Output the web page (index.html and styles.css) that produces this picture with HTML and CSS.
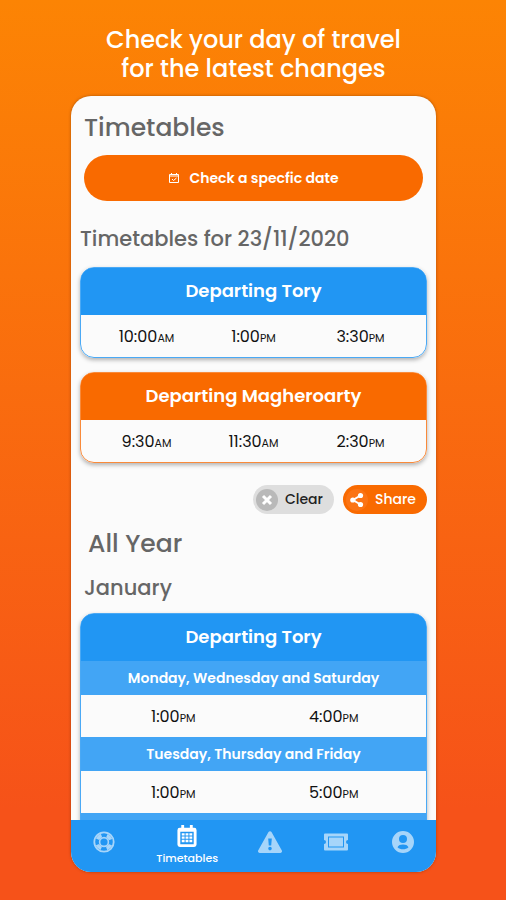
FILE: index.html
```html
<!DOCTYPE html>
<html lang="en">
<head>
<meta charset="utf-8">
<meta name="viewport" content="width=device-width, initial-scale=1">
<title>Timetables</title>
<link rel="stylesheet" href="styles.css">
</head>
<body>
<h1 class="tagline">Check your day of travel<br>for the latest changes</h1>
<div class="phone">
  <main class="screen">
    <h2 class="title">Timetables</h2>
    <button class="check" type="button">
      <svg viewBox="0 0 12 12" width="12" height="12" fill="none" stroke="currentColor" aria-hidden="true"><path d="M1.5 2.5h9v8h-9zM1.5 4h9M3.5 1v2M8.500 1v2M4 7l1.500 1.500L8.500 6"/></svg>
      Check a specfic date
    </button>

    <h3 class="day-title">Timetables for 23/11/2020</h3>
    <section class="card blue">
      <h4 class="card-head">Departing Tory</h4>
      <table class="times three">
        <tbody><tr><td>10:00<small>AM</small></td><td>1:00<small>PM</small></td><td>3:30<small>PM</small></td></tr></tbody>
      </table>
    </section>
    <section class="card orange">
      <h4 class="card-head">Departing Magheroarty</h4>
      <table class="times three">
        <tbody><tr><td>9:30<small>AM</small></td><td>11:30<small>AM</small></td><td>2:30<small>PM</small></td></tr></tbody>
      </table>
    </section>

    <div class="actions">
      <button class="pill clear" type="button">
        <svg viewBox="0 0 22 22" width="22" height="22" aria-hidden="true"><circle cx="11" cy="11" r="11" fill="#b9b9b9"/><path d="M7 7l8 8M15 7l-8 8" stroke="#fff" stroke-width="3"/></svg>
        <span>Clear</span>
      </button>
      <button class="pill share" type="button">
        <svg viewBox="0 0 22 22" width="22" height="22" aria-hidden="true"><circle cx="11" cy="11" r="11" fill="#fb7414"/><path d="M14.500 6.500L7 11l7.500 4.500" fill="none" stroke="#fff" stroke-width="2"/><g fill="#fff"><circle cx="14.500" cy="6.500" r="2.600"/><circle cx="6.800" cy="11" r="2.600"/><circle cx="14.500" cy="15.500" r="2.600"/></g></svg>
        <span>Share</span>
      </button>
    </div>

    <h2 class="season">All Year</h2>
    <h3 class="month">January</h3>
    <section class="card blue">
      <h4 class="card-head">Departing Tory</h4>
      <table class="times two">
        <tbody>
          <tr><th colspan="2">Monday, Wednesday and Saturday</th></tr>
          <tr><td>1:00<small>PM</small></td><td>4:00<small>PM</small></td></tr>
          <tr><th colspan="2">Tuesday, Thursday and Friday</th></tr>
          <tr><td>1:00<small>PM</small></td><td>5:00<small>PM</small></td></tr>
          <tr><th colspan="2"></th></tr>
        </tbody>
      </table>
    </section>
  </main>

  <nav class="tabs">
    <a class="tab" href="#" aria-label="Help">
      <svg viewBox="0 0 22 22" width="22" height="22" fill="none" stroke="currentColor" aria-hidden="true"><circle cx="11" cy="11" r="9.700" stroke-width="1.800"/><circle cx="11" cy="11" r="4.400" stroke-width="1.600"/><circle cx="11" cy="11" r="7" stroke-width="3.600" stroke-dasharray="5.500 5.496" stroke-dashoffset="-2.750"/></svg>
    </a>
    <a class="tab active" href="#" aria-current="page">
      <svg viewBox="0 0 20 23" width="20" height="23" aria-hidden="true"><path fill="currentColor" fill-rule="evenodd" d="M4 0h3v3h6V0h3v3h1.500A2.500 2.500 0 0 1 20 5.500v15a2.500 2.500 0 0 1-2.500 2.500h-15A2.500 2.500 0 0 1 0 20.500v-15A2.500 2.500 0 0 1 2.500 3H4zM3 7v13h14V7z"/><path fill="currentColor" d="M4.500 8.500h3v2.500h-3zM8.500 8.500h3v2.500h-3zM12.500 8.500h3v2.500h-3zM4.500 12h3v2.500h-3zM8.500 12h3v2.500h-3zM12.500 12h3v2.500h-3zM4.500 15.500h3V18h-3zM8.500 15.500h3V18h-3zM12.500 15.500h3V18h-3z"/></svg>
      <span>Timetables</span>
    </a>
    <a class="tab" href="#" aria-label="Alerts">
      <svg viewBox="0 0 24 22" width="24" height="22" aria-hidden="true"><path fill="currentColor" fill-rule="evenodd" d="M10.500 1a1.800 1.800 0 0 1 3 0l10.200 18.200A1.800 1.800 0 0 1 22.200 22H1.800a1.800 1.800 0 0 1-1.500-2.800zM10.200 7.500l.6 7h2.400l.6-7zM12 15.800a1.800 1.800 0 1 0 0 3.600 1.800 1.800 0 0 0 0-3.600z"/></svg>
    </a>
    <a class="tab" href="#" aria-label="Tickets">
      <svg viewBox="0 0 24 17" width="24" height="17" aria-hidden="true"><path fill="currentColor" fill-rule="evenodd" d="M1 0h22a1 1 0 0 1 1 1v5.500a2 2 0 0 0 0 4V16a1 1 0 0 1-1 1H1a1 1 0 0 1-1-1v-5.500a2 2 0 0 0 0-4V1a1 1 0 0 1 1-1zM4 3v11h16V3z"/><path fill="currentColor" d="M5 4h14v9H5z"/></svg>
    </a>
    <a class="tab" href="#" aria-label="Account">
      <svg viewBox="0 0 22 22" width="22" height="22" aria-hidden="true"><path fill="currentColor" fill-rule="evenodd" d="M11 0a11 11 0 1 0 0 22 11 11 0 0 0 0-22zM11 4a4 4 0 1 1 0 8 4 4 0 0 1 0-8zM5.500 16.200c1-2 2.800-2.700 5.500-2.700s4.500.7 5.500 2.700c-1.500 1.500-3.300 2.100-5.500 2.100s-4-.6-5.500-2.100z"/></svg>
    </a>
  </nav>
</div>
</body>
</html>
```
FILE: styles.css
```css
* { box-sizing: border-box; }

body {
  margin: 0;
  height: 100vh;
  padding: 25px 70px 28px 71px;
  display: flex;
  flex-direction: column;
  gap: 13px;
  background: linear-gradient(#fc8404, #f65219 90%);
  font-family: Poppins, Inter, "Open Sans", sans-serif;
  color: #666;
}

h1, h2, h3, h4 { margin: 0; font-weight: 500; }

button { border: 0; font: inherit; }

.tagline {
  color: #fff;
  font-size: 24px;
  line-height: 29px;
  text-align: center;
  white-space: nowrap;
}

.phone {
  flex: 1;
  min-height: 0;
  display: flex;
  flex-direction: column;
  overflow: hidden;
  border-radius: 20px;
  background: #fbfbfb;
  box-shadow: 0 0 3px rgba(90, 40, 0, 0.5);
}

.screen {
  flex: 1;
  min-height: 0;
  overflow: hidden;
  display: flex;
  flex-direction: column;
  padding: 0 9px;
}

.screen > * { flex-shrink: 0; }

.title {
  padding: 16px 4px 11px;
  font-size: 25px;
  line-height: 32px;
}

.check {
  height: 46px;
  margin: 0 4px;
  display: flex;
  align-items: center;
  justify-content: center;
  gap: 9px;
  border-radius: 23px;
  background: #f96a00;
  color: #fff;
  font-size: 14px;
  font-weight: 600;
}

.day-title {
  padding: 24px 0 14px;
  font-size: 21px;
  line-height: 28px;
}

.card {
  margin-bottom: 14px;
  overflow: hidden;
  border: 1px solid var(--edge);
  border-radius: 14px;
  background: linear-gradient(var(--accent) 47px, #fbfbfb 47px) border-box;
  box-shadow: 0 2px 4px rgba(0, 0, 0, 0.3);
}

.blue { --accent: #2196f3; --edge: #4aa9f5; }
.orange { --accent: #f96a00; --edge: #f98a3a; }

.card-head {
  padding-bottom: 1px;
  background: var(--accent);
  color: #fff;
  font-size: 18px;
  font-weight: 600;
  line-height: 46px;
  text-align: center;
}

.times {
  width: 100%;
  table-layout: fixed;
  border-collapse: collapse;
  color: #111;
  font-size: 16px;
}

.times td, .times th { height: 42px; padding: 0; text-align: center; }
.times small { font-size: 11px; }

.times th {
  height: 34px;
  background: #42a5f5;
  color: #fff;
  font-size: 14px;
  font-weight: 600;
}

.three td:first-child { padding-left: 16px; }
.three td:last-child { padding-right: 16px; }
.two td:first-child { padding-left: 12px; }
.two td:last-child { padding-right: 12px; }

.actions {
  display: flex;
  justify-content: flex-end;
  gap: 9px;
  padding: 8px 0 14px;
}

.pill {
  height: 29px;
  padding: 0 11px 0 3px;
  display: flex;
  align-items: center;
  gap: 7px;
  border-radius: 15px;
  font-size: 14px;
  font-weight: 500;
}

.clear { background: #dedede; color: #222; }
.share { background: #f96a00; color: #fff; }

.season {
  padding: 0 8px;
  font-size: 25px;
  line-height: 32px;
}

.month {
  padding: 14px 4px 11px;
  font-size: 21px;
  line-height: 28px;
}

.tabs {
  height: 52px;
  display: flex;
  background: #2196f3;
}

.tab {
  flex: 2;
  display: flex;
  flex-direction: column;
  align-items: center;
  padding-top: 11px;
  color: #a6d5fa;
  text-decoration: none;
}

.tab svg { height: 22px; }

.active {
  flex: 3;
  padding-top: 5px;
  gap: 4px;
  color: #fff;
  font-size: 11px;
  font-weight: 500;
  line-height: 14px;
}
```
